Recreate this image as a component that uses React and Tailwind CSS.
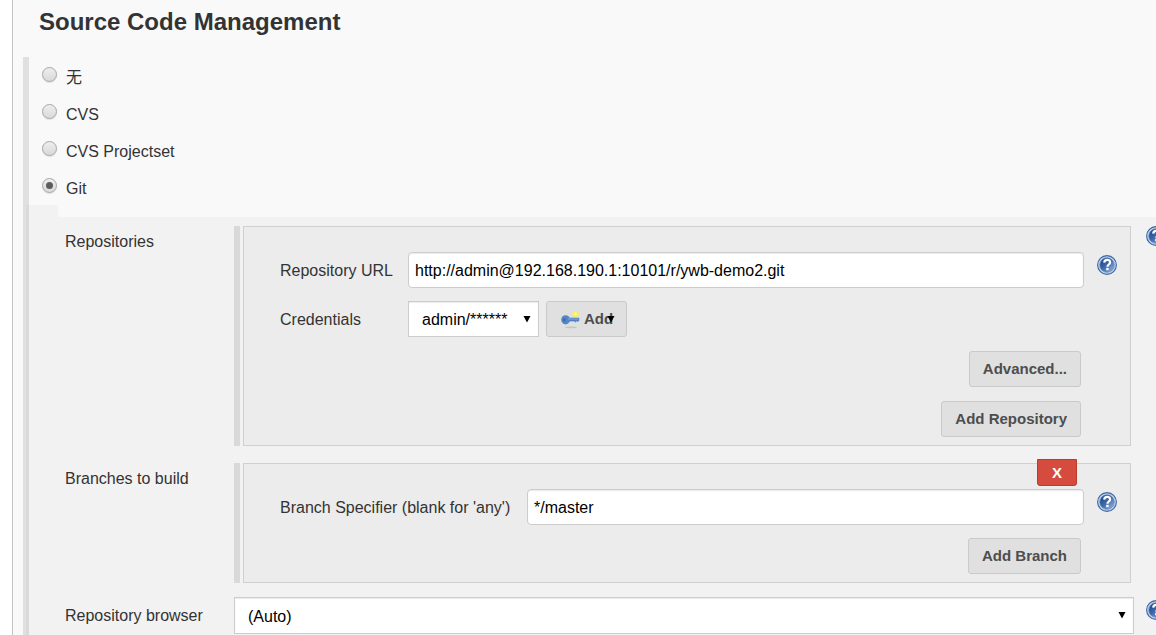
import { useState } from 'react';
import clsx from 'clsx';

const scmOptions = [
  { value: 'none', label: '无' },
  { value: 'cvs', label: 'CVS' },
  { value: 'cvs-projectset', label: 'CVS Projectset' },
  { value: 'git', label: 'Git' },
];

const HelpIcon = () => (
  <svg viewBox="0 0 20 20" className="h-5 w-5 shrink-0" aria-hidden="true">
    <defs>
      <linearGradient id="help-fill" x1="0" y1="0" x2="1" y2="1">
        <stop offset="0.1" stopColor="#1d4688" />
        <stop offset="0.5" stopColor="#3f6bab" />
        <stop offset="1" stopColor="#a3c0e4" />
      </linearGradient>
    </defs>
    <circle cx="10" cy="10" r="9.4" fill="#bfd1e8" stroke="#3b66a6" strokeWidth="1.1" />
    <circle cx="10" cy="10" r="7.2" fill="url(#help-fill)" stroke="#5a80b6" strokeWidth="0.7" />
    <path
      d="M7.2 7.6C7.4 5.6 8.6 4.9 10.1 4.9c1.8 0 3 1 3 2.5 0 2.1-2.7 2.1-2.7 4.3"
      fill="none"
      stroke="#fff"
      strokeWidth="2.2"
    />
    <rect x="9.2" y="12.8" width="2.4" height="2.4" fill="#fff" />
  </svg>
);

const HelpLink = ({ className = '' }) => (
  <a href="#help" aria-label="Help" className={clsx('block shrink-0', className)}>
    <HelpIcon />
  </a>
);

const KeyIcon = () => (
  <svg viewBox="0 0 20 20" className="h-5 w-5 shrink-0" aria-hidden="true">
    <ellipse cx="11" cy="18.4" rx="6" ry="0.9" fill="#000" opacity="0.12" />
    <circle cx="15.5" cy="5" r="3.2" fill="#f3ee62" />
    <circle cx="15.5" cy="5" r="1.4" fill="#fffb9c" />
    <path d="M8 9h11v2.4l-1 1.2-1.2-.8-1.3 1.2-1.5-1H8z" fill="#5585c4" stroke="#3d6dad" strokeWidth="0.5" />
    <ellipse cx="5.6" cy="10.8" rx="4.4" ry="4.6" fill="#5585c4" />
    <ellipse cx="4.2" cy="10.8" rx="1.2" ry="1.6" fill="#3a67a5" />
    <path d="M8 10h10.5" stroke="#8fb2df" strokeWidth="0.8" />
  </svg>
);

const Caret = ({ className }) => (
  <svg viewBox="0 0 8 8" className={clsx('pointer-events-none absolute h-2 w-2', className)} aria-hidden="true">
    <path d="M0.5 1h7L4 7.5z" fill="#000" />
  </svg>
);

const Button = ({ children, className = '' }) => (
  <button
    type="button"
    className={clsx(
      'h-9 rounded-[3px] border border-[#cacaca] bg-[#e0e0e0] px-[13px] text-[15px] font-bold text-[#4d4d4d]',
      className
    )}
  >
    {children}
  </button>
);

const TextInput = ({ id, defaultValue }) => (
  <input
    id={id}
    type="text"
    defaultValue={defaultValue}
    className="h-9 min-w-0 flex-1 rounded-[4px] border border-[#ccc] bg-white px-[6px] pt-0.5 text-black shadow-[inset_0_1px_1px_rgba(0,0,0,0.08)]"
  />
);

const Select = ({ id, options, className = '' }) => (
  <div className={clsx('relative', className)}>
    <select
      id={id}
      className="h-full w-full appearance-none border border-[#ccc] bg-white px-[13px] pt-0.5 text-black shadow-[inset_0_1px_1px_rgba(0,0,0,0.08)]"
    >
      {options.map((opt) => (
        <option key={opt}>{opt}</option>
      ))}
    </select>
    <Caret className="right-2 top-[14px]" />
  </div>
);

const Chunk = ({ children }) => (
  <div className="min-w-0 flex-1 border-l-[6px] border-[#d9d9d9] pl-[3px]">
    <div className="relative border border-[#d0d0d0] bg-[#ececec] pb-2 pl-9 pr-[13px] pt-[25px]">{children}</div>
  </div>
);

export default function App() {
  const [scm, setScm] = useState('git');

  return (
    <div className="flex min-h-screen overflow-hidden bg-white pl-3 font-['Liberation_Sans','Noto_Sans_CJK_SC',sans-serif] text-[16px] leading-6 text-[#333]">
      <main className="flex min-w-0 flex-1 flex-col border-l border-[#c4c4c4] bg-[#f9f9f9] pl-[10px]">
        <h1 className="pb-[19px] pl-4 pt-[6px] text-[24px] font-bold leading-8">Source Code Management</h1>

        <div className="flex-1 border-l-[6px] border-[#e0e0e0]">
          {scmOptions.map((opt) => (
            <div key={opt.value} className="flex h-[37px] items-start pl-[13px] pt-[9px]">
              <input
                id={opt.value}
                type="radio"
                name="scm"
                checked={scm === opt.value}
                onChange={() => setScm(opt.value)}
                className="mt-px grid h-[15px] w-[15px] appearance-none place-items-center rounded-full border border-[#a6a6a6] bg-linear-to-b from-[#eee] to-[#d9d9d9] shadow-[0_1px_1px_rgba(0,0,0,0.1)] checked:before:h-[7px] checked:before:w-[7px] checked:before:rounded-full checked:before:bg-[#5c5c5c] checked:before:content-['']"
              />
              <label htmlFor={opt.value} className="pl-[9px]">
                {opt.label}
              </label>
            </div>
          ))}

          <section className="-ml-[3px] border-l-[3px] border-[#d9d9d9] bg-[#f2f2f2]">
            <div className="ml-[29px] h-3 bg-[#f9f9f9]" />
            <div className="pb-px pl-9 pt-[9px]">
              <div className="flex items-start">
                <span className="w-[169px] shrink-0 pt-1">Repositories</span>
                <Chunk>
                  <div className="flex items-start">
                    <label htmlFor="repo-url" className="w-32 shrink-0 pt-[7px]">
                      Repository URL
                    </label>
                    <TextInput id="repo-url" defaultValue="http://admin@192.168.190.1:10101/r/ywb-demo2.git" />
                    <HelpLink className="ml-[13px] mt-[3px]" />
                  </div>
                  <div className="mt-[13px] flex items-start">
                    <label htmlFor="credentials" className="w-32 shrink-0 pt-[7px]">
                      Credentials
                    </label>
                    <Select id="credentials" options={['admin/******']} className="h-9 w-[131px]" />
                    <Button className="relative ml-[7px] flex w-[81px] items-center gap-1">
                      <KeyIcon />
                      Add
                      <Caret className="right-[11px] top-[13px]" />
                    </Button>
                  </div>
                  <div className="mr-9 mt-[14px] flex flex-col items-end gap-[14px]">
                    <Button>Advanced...</Button>
                    <Button>Add Repository</Button>
                  </div>
                </Chunk>
                <HelpLink className="ml-[15px] w-[10px] overflow-hidden" />
              </div>

              <div className="mr-[25px] mt-[17px] flex items-start">
                <span className="w-[169px] shrink-0 pt-1">Branches to build</span>
                <Chunk>
                  <button
                    type="button"
                    className="absolute -top-[5px] right-[53px] h-[27px] w-10 rounded-b-[3px] border border-[#b93c2e] bg-[#d54b3d] text-[15px] font-bold leading-6 text-white"
                  >
                    X
                  </button>
                  <div className="flex items-start">
                    <label htmlFor="branch" className="w-[247px] shrink-0 pt-[7px]">
                      Branch Specifier (blank for 'any')
                    </label>
                    <TextInput id="branch" defaultValue="*/master" />
                    <HelpLink className="ml-[13px] mt-[3px]" />
                  </div>
                  <div className="mr-9 mt-[13px] flex justify-end">
                    <Button>Add Branch</Button>
                  </div>
                </Chunk>
              </div>

              <div className="mt-[14px] flex items-start">
                <label htmlFor="browser" className="w-[169px] shrink-0 pt-[7px]">
                  Repository browser
                </label>
                <Select id="browser" options={['(Auto)']} className="h-[37px] min-w-0 flex-1" />
                <HelpLink className="ml-3 mt-[3px] w-[10px] overflow-hidden" />
              </div>
            </div>
          </section>
        </div>
      </main>
    </div>
  );
}
